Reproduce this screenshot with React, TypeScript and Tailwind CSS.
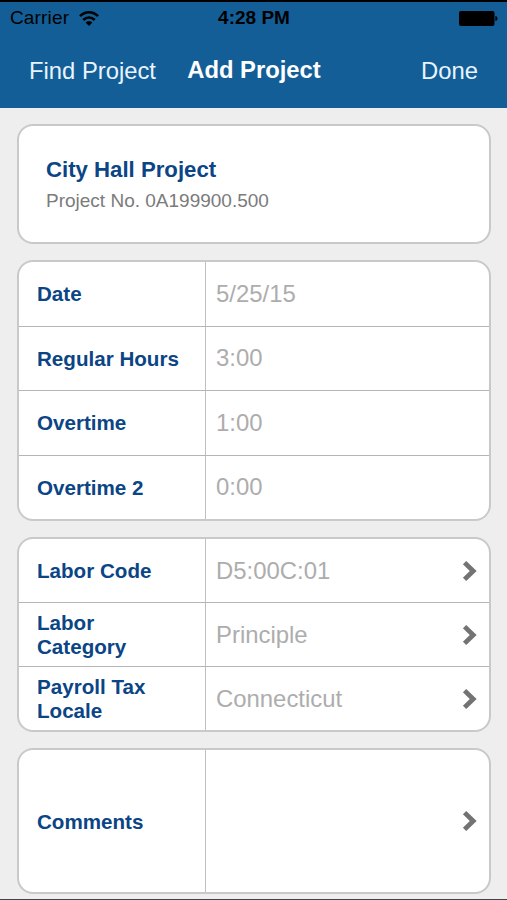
import type { ReactNode } from "react";

interface Field {
  label: string;
  value: string;
}

const hourFields: Field[] = [
  { label: "Date", value: "5/25/15" },
  { label: "Regular Hours", value: "3:00" },
  { label: "Overtime", value: "1:00" },
  { label: "Overtime 2", value: "0:00" },
];

const laborFields: Field[] = [
  { label: "Labor Code", value: "D5:00C:01" },
  { label: "Labor Category", value: "Principle" },
  { label: "Payroll Tax Locale", value: "Connecticut" },
];

function WifiIcon() {
  return (
    <svg className="ml-[10px] h-[15px] w-5" viewBox="0 0 20 15" fill="none" stroke="#000" strokeWidth="2.6">
      <path d="M1 5.2C6 0 14 0 19 5.2" />
      <path d="M4.3 9C7.5 5.7 12.5 5.7 15.7 9" />
      <path d="M10 15L6.6 11.6C8.5 9.8 11.5 9.8 13.4 11.6Z" fill="#000" stroke="none" />
    </svg>
  );
}

function BatteryIcon() {
  return (
    <svg className="h-[15px] w-[39px]" viewBox="0 0 39 15">
      <rect width="35.5" height="15" rx="2" />
      <path d="M36.4 5C39.2 5.6 39.2 9.4 36.4 10Z" />
    </svg>
  );
}

function Chevron() {
  return (
    <svg className="mr-[12px] h-[22px] w-[15px]" viewBox="0 0 15 22" fill="none" stroke="#737373" strokeWidth="4.8">
      <path d="M2.6 2.6L11.2 11L2.6 19.4" />
    </svg>
  );
}

function Card({ children, className }: { children: ReactNode; className: string }) {
  return (
    <section className={`flex flex-col overflow-hidden rounded-[16px] border-2 border-[#c9c9c9] bg-white ${className}`}>
      {children}
    </section>
  );
}

function Row({ label, value, link }: Field & { link?: boolean }) {
  return (
    <div className="flex min-h-0 flex-1 border-b border-[#b5b5b5] last:border-b-0">
      <div className="flex w-[187px] items-center border-r border-[#c0c0c0] pr-6 pl-[18px]">
        <span className="pt-[1px] text-[20.6px] leading-[24px] font-bold text-[#0b4585]">{label}</span>
      </div>
      <div className="flex flex-1 items-center justify-between pl-[10px]">
        <span className="text-[23.9px] text-[#adadad]">{value}</span>
        {link && <Chevron />}
      </div>
    </div>
  );
}

export default function App() {
  return (
    <div className="flex h-[900px] w-[507px] flex-col overflow-hidden border-t-2 border-b border-t-black border-b-[#444] bg-[#eeeeee] font-['Liberation_Sans',Arial,sans-serif]">
      <header className="h-[106px] bg-[#135e96]">
        <div className="grid h-8 grid-cols-3 items-center pr-[9px] pl-[10px] text-[19px] text-black">
          <div className="flex items-center">
            <span className="tracking-[0.15px]">Carrier</span>
            <WifiIcon />
          </div>
          <span className="pt-px text-center font-bold">4:28 PM</span>
          <div className="flex justify-end">
            <BatteryIcon />
          </div>
        </div>
        <nav className="grid h-[74px] grid-cols-[159px_1fr_159px] items-start pt-[23px] text-[23.8px] leading-7 whitespace-nowrap text-[#e9f4ff]">
          <span className="pl-[29px]">Find Project</span>
          <span className="-mt-px pl-px text-center font-bold text-white">Add Project</span>
          <span className="pr-[29px] text-right">Done</span>
        </nav>
      </header>

      <main className="flex flex-col gap-4 pt-4 pr-4 pl-[17px]">
        <Card className="h-[120px] pt-[30px] pl-[27px]">
          <h1 className="text-[22.2px] leading-7 font-bold text-[#0b4585]">City Hall Project</h1>
          <p className="pt-[3px] text-[19px] leading-7 text-[#7b7b7b]">Project No. 0A199900.500</p>
        </Card>

        <Card className="h-[261px]">
          {hourFields.map((field) => (
            <Row key={field.label} {...field} />
          ))}
        </Card>

        <Card className="h-[195px]">
          {laborFields.map((field) => (
            <Row key={field.label} {...field} link />
          ))}
        </Card>

        <Card className="h-[146px]">
          <Row label="Comments" value="" link />
        </Card>
      </main>
    </div>
  );
}
